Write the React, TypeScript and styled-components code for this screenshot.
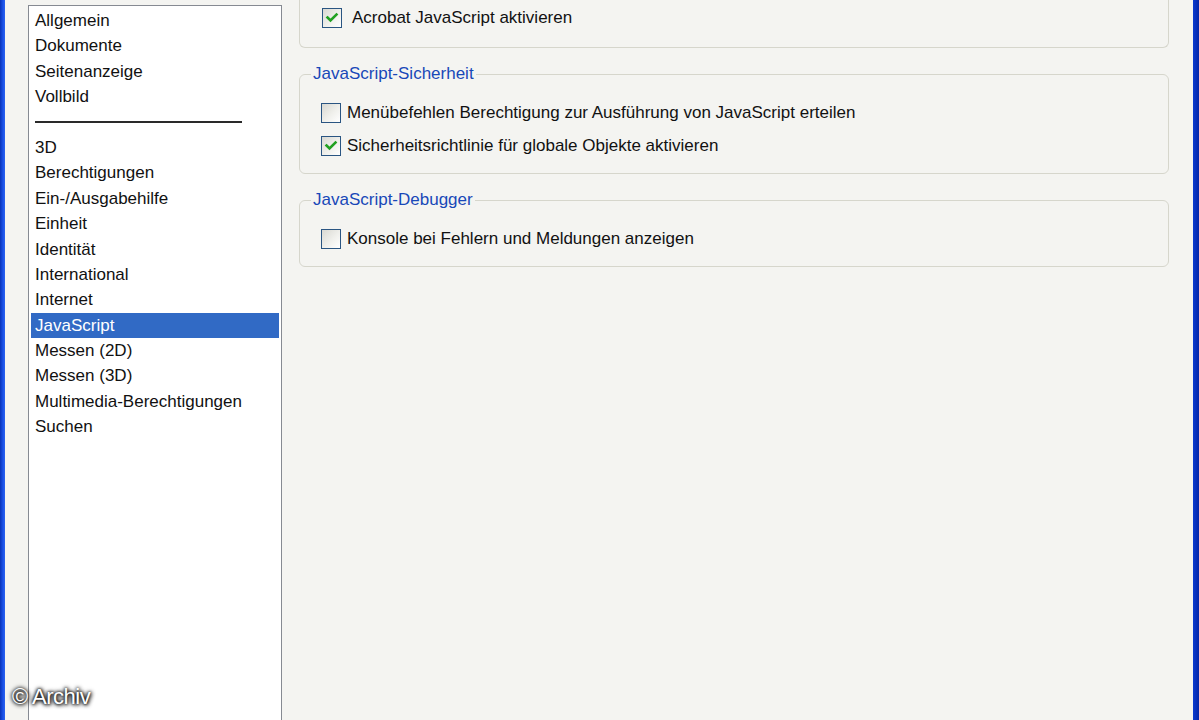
import React from 'react';
import styled, { createGlobalStyle } from 'styled-components';

const GlobalStyle = createGlobalStyle`
  html, body {
    margin: 0;
    padding: 0;
    background: #f4f4f1;
  }
  * {
    box-sizing: border-box;
  }
`;

const categoriesTop = ['Allgemein', 'Dokumente', 'Seitenanzeige', 'Vollbild'];
const categoriesBottom = [
  '3D',
  'Berechtigungen',
  'Ein-/Ausgabehilfe',
  'Einheit',
  'Identität',
  'International',
  'Internet',
  'JavaScript',
  'Messen (2D)',
  'Messen (3D)',
  'Multimedia-Berechtigungen',
  'Suchen',
];

const CheckMark: React.FC = () => (
  <svg width="14" height="14" viewBox="0 0 14 14">
    <path d="M2.5 6.5 L5.5 9.5 L11.5 3.5" fill="none" stroke="#21a121" strokeWidth="2.6" strokeLinecap="square" />
  </svg>
);

const Option: React.FC<{ label: string; checked?: boolean; gap?: number }> = ({ label, checked, gap = 6 }) => (
  <Row $gap={gap}>
    <Box>{checked && <CheckMark />}</Box>
    <Label>{label}</Label>
  </Row>
);

const App: React.FC = () => {
  return (
    <>
      <GlobalStyle />
      <Window>
        <FrameLeft />
        <Body>
          <ListBox>
            {categoriesTop.map((c) => (
              <ListItem key={c}>{c}</ListItem>
            ))}
            <Separator>
              <SeparatorLine />
            </Separator>
            {categoriesBottom.map((c) => (
              <ListItem key={c} $selected={c === 'JavaScript'}>
                {c}
              </ListItem>
            ))}
          </ListBox>
          <Panel>
            <TopGroup>
              <Option label="Acrobat JavaScript aktivieren" checked gap={10} />
            </TopGroup>
            <Group>
              <Legend>JavaScript-Sicherheit</Legend>
              <Option label="Menübefehlen Berechtigung zur Ausführung von JavaScript erteilen" />
              <Option label="Sicherheitsrichtlinie für globale Objekte aktivieren" checked />
            </Group>
            <Group>
              <Legend>JavaScript-Debugger</Legend>
              <Option label="Konsole bei Fehlern und Meldungen anzeigen" />
            </Group>
          </Panel>
        </Body>
        <FrameRight />
        <Watermark>© Archiv</Watermark>
      </Window>
    </>
  );
};

const Window = styled.div`
  position: relative;
  display: flex;
  width: 1199px;
  height: 720px;
  overflow: hidden;
  background: #f4f4f1;
  font-family: 'Liberation Sans', Arial, sans-serif;
  font-size: 17px;
  color: #111;
`;

const FrameLeft = styled.div`
  width: 5px;
  flex-shrink: 0;
  background: linear-gradient(to right, #0832b8, #1a52e8 60%, #2c62f0);
`;

const FrameRight = styled.div`
  width: 6px;
  flex-shrink: 0;
  margin-left: 23px;
  background: linear-gradient(to right, #0a3ad0, #0426a8);
`;

const Body = styled.div`
  flex: 1;
  display: flex;
  gap: 17px;
  padding-left: 23px;
`;

const ListBox = styled.div`
  width: 254px;
  flex-shrink: 0;
  margin-top: 5px;
  height: 740px;
  padding: 2px 2px 0;
  background: #ffffff;
  border: 1px solid #868a92;
`;

const ListItem = styled.div<{ $selected?: boolean }>`
  height: 25.4px;
  line-height: 25.4px;
  padding-left: 4px;
  white-space: nowrap;
  background: ${(p) => (p.$selected ? '#316ac5' : 'transparent')};
  color: ${(p) => (p.$selected ? '#ffffff' : '#111')};
`;

const Separator = styled.div`
  height: 25.4px;
  display: flex;
  align-items: center;
  padding-left: 4px;
`;

const SeparatorLine = styled.div`
  width: 207px;
  height: 2px;
  background: #2a2a2a;
`;

const Panel = styled.div`
  width: 870px;
  flex-shrink: 0;
  display: flex;
  flex-direction: column;
`;

const TopGroup = styled.div`
  height: 48px;
  padding: 6px 22px 0;
  border: 1px solid #d6d6cc;
  border-top: none;
  border-radius: 0 0 6px 6px;
`;

const Group = styled.fieldset`
  margin: 17px 0 0;
  padding: 18px 21px 15px;
  min-width: 0;
  border: 1px solid #d6d6cc;
  border-radius: 6px;
  display: flex;
  flex-direction: column;
  gap: 9px;
`;

const Legend = styled.legend`
  margin-left: -10px;
  padding: 0 2px;
  line-height: 18px;
  color: #1848b8;
`;

const Row = styled.div<{ $gap: number }>`
  display: flex;
  align-items: center;
  gap: ${(p) => p.$gap}px;
  height: 24px;
`;

const Box = styled.div`
  width: 20px;
  height: 20px;
  flex-shrink: 0;
  display: flex;
  align-items: center;
  justify-content: center;
  border: 1px solid #2a5582;
  background: linear-gradient(135deg, #d8d8d2 0%, #f0f0ec 55%, #ffffff 100%);
`;

const Label = styled.span`
  white-space: nowrap;
`;

const Watermark = styled.div`
  position: absolute;
  left: 12px;
  bottom: 10px;
  font-family: 'Liberation Sans', Arial, sans-serif;
  font-size: 22px;
  color: #ffffff;
  letter-spacing: -0.5px;
  text-shadow: 0 0 3px #000, 0 0 5px #000, 1px 1px 4px #222;
`;

export default App;
